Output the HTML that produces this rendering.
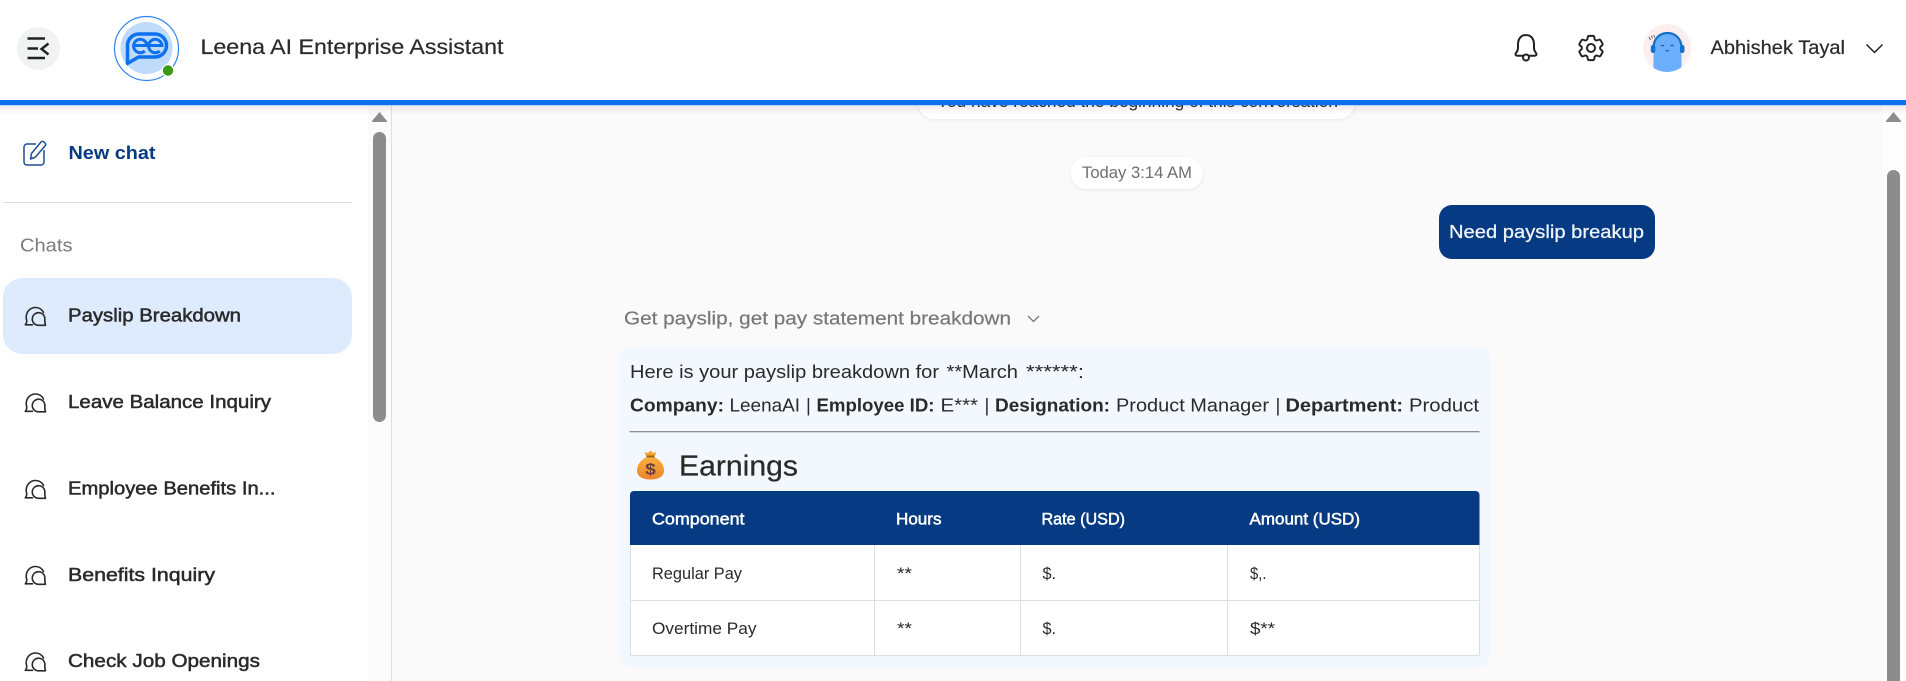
<!DOCTYPE html>
<html lang="en">
<head>
<meta charset="utf-8">
<title>Leena AI Enterprise Assistant</title>
<style>
html,body{margin:0;padding:0;width:1906px;height:681px;overflow:hidden;background:#fafafa}
svg{display:block}
text{font-family:"Liberation Sans",sans-serif;fill:#2a2a2a}
.m{stroke:#2a2a2a;stroke-width:.5}
.b{font-weight:700}
</style>
</head>
<body>
<svg width="1906" height="681" viewBox="0 0 1906 681" xmlns="http://www.w3.org/2000/svg">
<defs>
<linearGradient id="sh" x1="0" y1="0" x2="0" y2="1"><stop offset="0" stop-color="#000" stop-opacity=".07"/><stop offset="1" stop-color="#000" stop-opacity="0"/></linearGradient>
<linearGradient id="bag" x1="0" y1="0" x2="0" y2="1"><stop offset="0" stop-color="#f8b03c"/><stop offset="1" stop-color="#e9842b"/></linearGradient>
<filter id="ps" x="-10%" y="-30%" width="120%" height="170%"><feDropShadow dx="0" dy="1" stdDeviation="1.5" flood-color="#000" flood-opacity=".08"/></filter>
<g id="chat" fill="none" stroke="#2a2a2a" stroke-width="1.6" stroke-linecap="round" stroke-linejoin="round">
<path d="M8 18.300H.8c1-1.200 1.600-2.800 1.400-4.500-.3-1-.5-2-.5-3C1.700 5 6 1 11 1c3.600 0 6.500 2 8 5"/>
<path d="M21 18.800h-7a6.300 6.300 0 1 1 6.300-5.300c-.1 2 .2 3.800.7 5.300z"/>
</g>
</defs>

<!-- page backgrounds -->
<rect width="1906" height="681" fill="#fafafa"/>
<rect x="0" y="100" width="368" height="581" fill="#fff"/>
<rect x="368" y="100" width="23" height="581" fill="#fbfbfb"/>
<rect x="391" y="100" width="1" height="581" fill="#dfdfdf"/>
<rect x="1882" y="100" width="24" height="581" fill="#fdfdfd"/>

<!-- main conversation -->
<rect x="918" y="86" width="437" height="33" rx="16.500" fill="#fff" filter="url(#ps)"/>
<text x="937" y="107" font-size="16.500" textLength="401" lengthAdjust="spacingAndGlyphs">You have reached the beginning of this conversation</text>

<rect x="1071" y="157" width="132" height="32" rx="16" fill="#fff" filter="url(#ps)"/>
<text x="1082" y="178" font-size="16.500" style="fill:#6f6f6f" textLength="110" lengthAdjust="spacingAndGlyphs">Today 3:14 AM</text>

<rect x="1439" y="205" width="216" height="54" rx="13" fill="#063a82"/>
<text x="1449" y="238" font-size="18.500" style="fill:#f2f6fc;stroke:#f2f6fc;stroke-width:.25" textLength="195" lengthAdjust="spacingAndGlyphs">Need payslip breakup</text>

<text x="624" y="324.500" font-size="18.500" style="fill:#777;stroke:#777;stroke-width:.2" textLength="387" lengthAdjust="spacingAndGlyphs">Get payslip, get pay statement breakdown</text>
<path d="M1028 316l5.500 5.500 5.500-5.500" fill="none" stroke="#777" stroke-width="1.300"/>

<rect x="619" y="346" width="872" height="321" rx="12" fill="#f3f7fe"/>
<text x="630" y="378" font-size="18.500" textLength="309" lengthAdjust="spacingAndGlyphs">Here is your payslip breakdown for</text>
<text x="946.500" y="378" font-size="18.500" textLength="71.500" lengthAdjust="spacingAndGlyphs">**March</text>
<text x="1026" y="378" font-size="18.500" textLength="58" lengthAdjust="spacingAndGlyphs">******:</text>

<text class="b" x="630" y="411.500" font-size="18.500" textLength="94" lengthAdjust="spacingAndGlyphs">Company:</text>
<text x="729.500" y="411.500" font-size="18.500" textLength="70.500" lengthAdjust="spacingAndGlyphs">LeenaAI</text>
<text x="806" y="411.500" font-size="18.500">|</text>
<text class="b" x="816.500" y="411.500" font-size="18.500" textLength="118" lengthAdjust="spacingAndGlyphs">Employee ID:</text>
<text x="940.500" y="411.500" font-size="18.500" textLength="37.500" lengthAdjust="spacingAndGlyphs">E***</text>
<text x="984.500" y="411.500" font-size="18.500">|</text>
<text class="b" x="995" y="411.500" font-size="18.500" textLength="115" lengthAdjust="spacingAndGlyphs">Designation:</text>
<text x="1116" y="411.500" font-size="18.500" textLength="153" lengthAdjust="spacingAndGlyphs">Product Manager</text>
<text x="1275.500" y="411.500" font-size="18.500">|</text>
<text class="b" x="1285.500" y="411.500" font-size="18.500" textLength="117.500" lengthAdjust="spacingAndGlyphs">Department:</text>
<text x="1409" y="411.500" font-size="18.500" textLength="70" lengthAdjust="spacingAndGlyphs">Product</text>

<rect x="629.500" y="431" width="850" height="1.300" fill="#8f8f8f"/>

<!-- money bag emoji -->
<path d="M646.500 457l-2-5 3.500 1 2.500-2.500 2.500 2.500 3.500-1-2 5z" fill="#f0a52f"/>
<rect x="646.500" y="455.500" width="8" height="2.200" fill="#a85f22"/>
<path d="M645.500 457.500h10c5 3 8.500 7.500 8.500 13 0 6.500-6.500 9-13.500 9s-13.500-2.500-13.500-9c0-5.500 3.500-10 8.500-13z" fill="url(#bag)"/>
<text x="645.300" y="474.500" font-size="16" class="b" style="fill:#6b3a3a" textLength="10.500" lengthAdjust="spacingAndGlyphs">$</text>

<text x="679" y="475.500" font-size="29" style="stroke:#2a2a2a;stroke-width:.25" textLength="119" lengthAdjust="spacingAndGlyphs">Earnings</text>

<!-- table -->
<rect x="630" y="491" width="849.500" height="164.500" rx="4" fill="#fff"/>
<path d="M630 545v-50a4 4 0 0 1 4-4h841.500a4 4 0 0 1 4 4v50z" fill="#063a82"/>
<g fill="#dcdfe3">
<rect x="630" y="600" width="849.500" height="1"/>
<rect x="630" y="655" width="849.500" height="1"/>
<rect x="874" y="545" width="1" height="110"/>
<rect x="1020" y="545" width="1" height="110"/>
<rect x="1227" y="545" width="1" height="110"/>
<rect x="1479" y="545" width="1" height="110"/>
<rect x="630" y="545" width="1" height="110"/>
</g>
<g font-size="16.500">
<text class="m" style="fill:#fff;stroke:#fff" x="652" y="524.500" textLength="92.500" lengthAdjust="spacingAndGlyphs">Component</text>
<text class="m" style="fill:#fff;stroke:#fff" x="896" y="524.500" textLength="45.500" lengthAdjust="spacingAndGlyphs">Hours</text>
<text class="m" style="fill:#fff;stroke:#fff" x="1041.500" y="524.500" textLength="83.500" lengthAdjust="spacingAndGlyphs">Rate (USD)</text>
<text class="m" style="fill:#fff;stroke:#fff" x="1249.500" y="524.500" textLength="110.500" lengthAdjust="spacingAndGlyphs">Amount (USD)</text>
<text x="652" y="579" textLength="90" lengthAdjust="spacingAndGlyphs">Regular Pay</text>
<text x="897" y="579" textLength="15" lengthAdjust="spacingAndGlyphs">**</text>
<text x="1042.500" y="579" textLength="13.500" lengthAdjust="spacingAndGlyphs">$.</text>
<text x="1250" y="579" textLength="16.500" lengthAdjust="spacingAndGlyphs">$,.</text>
<text x="652" y="634" textLength="104.500" lengthAdjust="spacingAndGlyphs">Overtime Pay</text>
<text x="897" y="634" textLength="15" lengthAdjust="spacingAndGlyphs">**</text>
<text x="1042.500" y="634" textLength="13.500" lengthAdjust="spacingAndGlyphs">$.</text>
<text x="1250" y="634" textLength="25" lengthAdjust="spacingAndGlyphs">$**</text>
</g>

<!-- main scrollbar -->
<path d="M1893.500 112l7.500 9a.7.7 0 0 1-.5 1h-14a.7.7 0 0 1-.5-1z" fill="#8c8c8c"/>
<rect x="1887" y="170" width="13" height="520" rx="6.500" fill="#8c8c8c"/>

<!-- sidebar -->
<path d="M36 144H27a3 3 0 0 0-3 3v15a3 3 0 0 0 3 3h14a3 3 0 0 0 3-3V150" fill="none" stroke="#1f4f94" stroke-width="1.500"/>
<path d="M30.500 159l1-5.500 9.500-11.500a2 2 0 0 1 3 0l1 1a2 2 0 0 1 0 3l-9.500 11z" fill="none" stroke="#1f4f94" stroke-width="1.500" stroke-linejoin="round"/>
<text class="b" x="68.500" y="159" font-size="18.500" style="fill:#063a82" textLength="87" lengthAdjust="spacingAndGlyphs">New chat</text>
<rect x="3" y="202" width="349" height="1" fill="#dfdfdf"/>
<text x="20" y="251.500" font-size="18" style="fill:#7c7c7c" textLength="52.500" lengthAdjust="spacingAndGlyphs">Chats</text>

<rect x="3" y="278" width="349" height="76" rx="19" fill="#deebfd"/>
<g font-size="18.500">
<use href="#chat" x="24.500" y="306.500"/>
<text class="m" x="68" y="321.500" textLength="173" lengthAdjust="spacingAndGlyphs">Payslip Breakdown</text>
<use href="#chat" x="24.500" y="393"/>
<text class="m" x="68" y="408" textLength="203" lengthAdjust="spacingAndGlyphs">Leave Balance Inquiry</text>
<use href="#chat" x="24.500" y="479.500"/>
<text class="m" x="68" y="494.500" textLength="207.500" lengthAdjust="spacingAndGlyphs">Employee Benefits In...</text>
<use href="#chat" x="24.500" y="565.500"/>
<text class="m" x="68" y="581" textLength="147" lengthAdjust="spacingAndGlyphs">Benefits Inquiry</text>
<use href="#chat" x="24.500" y="652"/>
<text class="m" x="68" y="667" textLength="192" lengthAdjust="spacingAndGlyphs">Check Job Openings</text>
</g>

<!-- sidebar scrollbar -->
<path d="M379.500 112l7.500 9a.7.7 0 0 1-.5 1h-14a.7.7 0 0 1-.5-1z" fill="#8c8c8c"/>
<rect x="373" y="132" width="13" height="290" rx="6.500" fill="#8c8c8c"/>

<!-- header -->
<rect x="0" y="0" width="1906" height="100" fill="#fff"/>
<rect x="0" y="105" width="1906" height="10" fill="url(#sh)"/>
<rect x="0" y="100" width="1906" height="5.200" fill="#0f70ef"/>

<circle cx="38.500" cy="48.500" r="21.500" fill="#f1f2f2"/>
<path d="M27.500 38.500H45M27.500 48.500H38M27.500 58H45" stroke="#222" stroke-width="2.600" fill="none"/>
<path d="M48.500 43.500l-7 5.500 7 5.500" stroke="#222" stroke-width="2.400" fill="none"/>

<circle cx="146.500" cy="48.500" r="32" fill="#fff" stroke="#2f82ee" stroke-width="1.200"/>
<circle cx="146.500" cy="48" r="26" fill="#bfdbfb"/>
<path d="M127.500 63.500V45.500a11.500 11.500 0 0 1 11.500-11.500H155a11.500 11.500 0 0 1 0 23H138.500z" fill="none" stroke="#0f70ef" stroke-width="3.500" stroke-linejoin="round"/>
<path d="M133.500 45.500H147A6.700 6.700 0 1 0 144.800 51M148.500 45.500H162A6.700 6.700 0 1 0 159.800 51" fill="none" stroke="#0f70ef" stroke-width="3"/>
<circle cx="168" cy="70.500" r="6.500" fill="#fff"/>
<circle cx="168" cy="70.500" r="5.200" fill="#3a9a17"/>

<text x="200.500" y="54" font-size="21" style="stroke:#2a2a2a;stroke-width:.2" textLength="303" lengthAdjust="spacingAndGlyphs">Leena AI Enterprise Assistant</text>

<!-- bell -->
<path d="M1526 35c-5.500 0-8 4.500-8 9.500v3.500c0 2.800-1.500 4.200-2.300 5.500-.5 1.300.2 2.200 1.500 2.200h17.600c1.300 0 2-.9 1.500-2.200-.8-1.300-2.300-2.700-2.300-5.500v-3.500c0-5-2.500-9.500-8-9.500z" fill="none" stroke="#222" stroke-width="2" stroke-linejoin="round"/>
<circle cx="1526" cy="57.500" r="3" fill="#fff" stroke="#222" stroke-width="2"/>

<!-- gear -->
<g transform="translate(1591 48) scale(1.350) translate(-12 -12)" fill="none" stroke="#222" stroke-width="1.450" stroke-linejoin="round">
<path d="M9.594 3.940c.09-.542.56-.94 1.110-.94h2.593c.55 0 1.020.398 1.110.94l.213 1.281c.063.374.313.686.645.870.074.040.147.083.22.127.325.196.72.257 1.075.124l1.217-.456a1.125 1.125 0 0 1 1.370.490l1.296 2.247a1.125 1.125 0 0 1-.26 1.431l-1.003.827c-.293.241-.438.613-.43.992a7.723 7.723 0 0 1 0 .255c-.008.378.137.75.43.991l1.004.827c.424.35.534.955.26 1.430l-1.298 2.247a1.125 1.125 0 0 1-1.369.491l-1.217-.456c-.355-.133-.75-.072-1.076.124a6.470 6.470 0 0 1-.22.128c-.331.183-.581.495-.644.869l-.213 1.281c-.09.543-.56.94-1.110.94h-2.594c-.55 0-1.019-.398-1.110-.94l-.213-1.281c-.062-.374-.312-.686-.644-.87a6.520 6.520 0 0 1-.22-.127c-.325-.196-.72-.257-1.076-.124l-1.217.456a1.125 1.125 0 0 1-1.369-.49l-1.297-2.247a1.125 1.125 0 0 1 .26-1.431l1.004-.827c.292-.24.437-.613.43-.991a6.932 6.932 0 0 1 0-.255c.007-.38-.138-.751-.43-.992l-1.004-.827a1.125 1.125 0 0 1-.26-1.430l1.297-2.247a1.125 1.125 0 0 1 1.370-.491l1.216.456c.356.133.751.072 1.076-.124.072-.044.146-.086.22-.128.332-.183.582-.495.644-.869l.214-1.280z"/>
<circle cx="12" cy="12" r="3"/>
</g>

<!-- avatar -->
<clipPath id="av"><circle cx="1667" cy="48" r="24"/></clipPath>
<circle cx="1667" cy="48" r="24" fill="#fdeeee"/>
<g clip-path="url(#av)">
<path d="M1653.500 69.500V47c0-8.500 6-14.500 14-14.500s14 6 14 14.500v22.500c-4 1.500-8 2.500-14 2.500s-10-1-14-2.500z" fill="#6aaefc"/>
<path d="M1653.500 46c1-8.500 7-13 14-13s13 4.500 14 13" fill="none" stroke="#1570c8" stroke-width="2.200"/>
<rect x="1650.800" y="45" width="4.500" height="8" rx="2.200" fill="#1570c8"/>
<rect x="1680" y="45" width="4.500" height="8" rx="2.200" fill="#1570c8"/>
<path d="M1661 46q1.500-1.500 3 0M1670.500 46q1.500-1.500 3 0M1665.500 50.500q1.500.8 3.500 0" fill="none" stroke="#24406b" stroke-width=".9"/>
<path d="M1649 37l1.500 3M1651.500 35.500l1 3M1654 35l.5 2.500" stroke="#555" stroke-width=".9" fill="none"/>
</g>

<text x="1710.500" y="54" font-size="19" style="stroke:#2a2a2a;stroke-width:.2" textLength="134.500" lengthAdjust="spacingAndGlyphs">Abhishek Tayal</text>
<path d="M1866.500 44.500l8 8 8-8" fill="none" stroke="#222" stroke-width="1.500"/>
</svg>
</body>
</html>
